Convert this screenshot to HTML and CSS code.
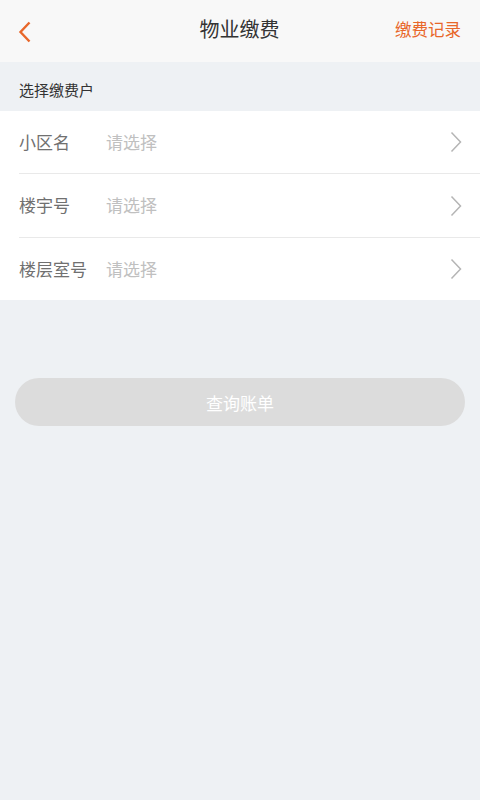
FILE: index.html
```html
<!DOCTYPE html>
<html lang="zh">
<head>
<meta charset="utf-8">
<title>物业缴费</title>
<link rel="stylesheet" href="styles.css">
</head>
<body>
<div class="page">
  <header class="topbar">
    <span class="back">
      <svg width="14" height="22" viewBox="0 0 14 22"><path d="M11.5 1.5 L2.5 11 L11.5 20.5" fill="none" stroke="#e8672a" stroke-width="2.4"/></svg>
    </span>
    <h1 class="title">物业缴费</h1>
    <span class="record">缴费记录</span>
  </header>
  <div class="section-label">选择缴费户</div>
  <ul class="list">
    <li class="row"><span class="label">小区名</span><span class="value">请选择</span><svg class="chev" width="12" height="22" viewBox="0 0 12 22"><path d="M1.5 1.5 L10.5 11 L1.5 20.5" fill="none" stroke="#b5b5b5" stroke-width="1.5"/></svg></li>
    <li class="row"><span class="label">楼宇号</span><span class="value">请选择</span><svg class="chev" width="12" height="22" viewBox="0 0 12 22"><path d="M1.5 1.5 L10.5 11 L1.5 20.5" fill="none" stroke="#b5b5b5" stroke-width="1.5"/></svg></li>
    <li class="row"><span class="label">楼层室号</span><span class="value">请选择</span><svg class="chev" width="12" height="22" viewBox="0 0 12 22"><path d="M1.5 1.5 L10.5 11 L1.5 20.5" fill="none" stroke="#b5b5b5" stroke-width="1.5"/></svg></li>
  </ul>
  <div class="actions">
    <button class="query">查询账单</button>
  </div>
</div>
</body>
</html>
```
FILE: styles.css
```css
html, body {
  margin: 0;
  padding: 0;
  background: #eef1f4;
  font-family: "Noto Sans CJK SC", "Noto Sans", sans-serif;
}
.page {
  width: 480px;
  min-height: 800px;
  background: #eef1f4;
}
.topbar {
  height: 62px;
  background: #f8f8f8;
  display: flex;
  align-items: center;
  justify-content: space-between;
  padding: 0 19px 0 18px;
  box-sizing: border-box;
}
.back {
  display: flex;
  align-items: center;
  width: 66px;
  margin-top: 2px;
}
.title {
  margin: 0;
  font-size: 20px;
  font-weight: 400;
  color: #333;
  line-height: 1;
  margin-top: -4px;
}
.record {
  width: 66px;
  white-space: nowrap;
  display: flex;
  justify-content: flex-end;
  font-size: 16.5px;
  color: #e8672a;
  margin-top: -4px;
}
.section-label {
  height: 49px;
  display: flex;
  align-items: center;
  padding-left: 19px;
  font-size: 15px;
  color: #333;
  padding-top: 6px;
  box-sizing: border-box;
}
.list {
  list-style: none;
  margin: 0;
  padding: 0 0 0 19px;
  background: #fff;
}
.row {
  height: 64px;
  display: flex;
  align-items: center;
  border-bottom: 1px solid #e9e9e9;
  padding-right: 18px;
  box-sizing: border-box;
}
.row:first-child {
  height: 63px;
}
.row:last-child {
  border-bottom: none;
  height: 62px;
}
.label {
  width: 87px;
  font-size: 17px;
  color: #707070;
  margin-top: -2px;
}
.value {
  flex: 1;
  font-size: 17px;
  color: #c0c0c0;
  margin-top: -2px;
}
.actions {
  padding: 78px 15px 0;
}
.query {
  width: 100%;
  height: 48px;
  border: none;
  border-radius: 24px;
  background: #dcdcdc;
  color: #fff;
  font-family: "Noto Sans CJK SC", "Noto Sans", sans-serif;
  font-size: 17px;
  padding: 0;
}
```
